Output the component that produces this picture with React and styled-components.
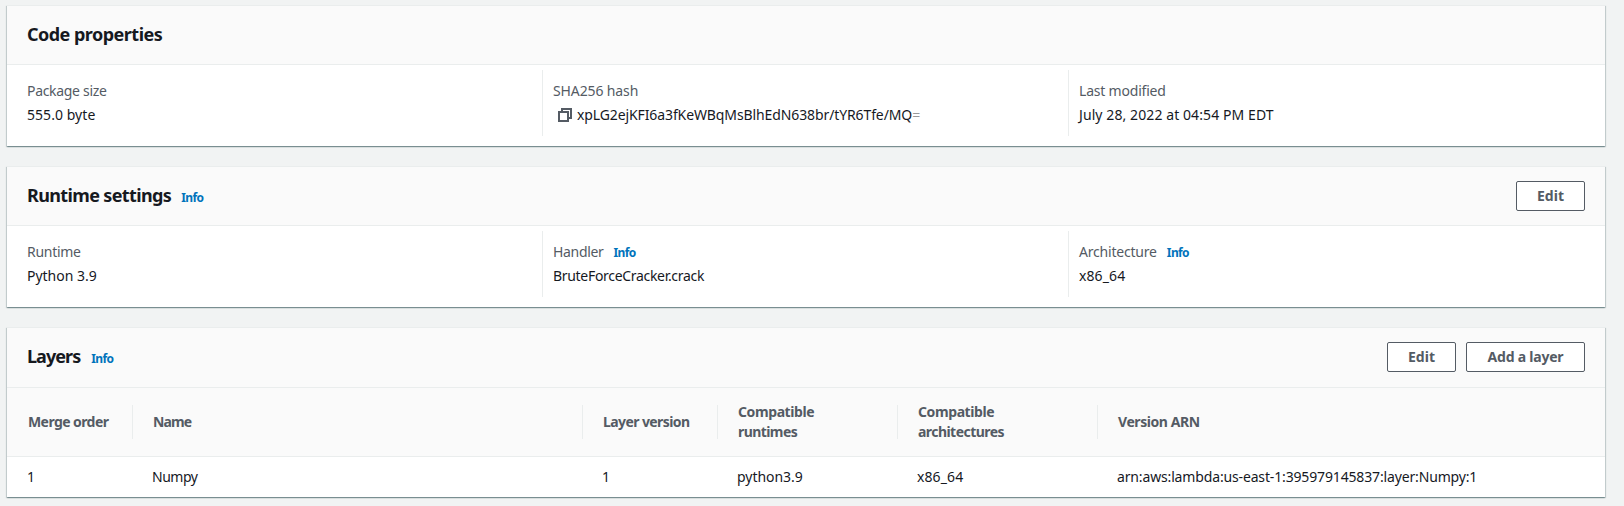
import React from "react";
import styled, { createGlobalStyle } from "styled-components";

const Global = createGlobalStyle`
  * { box-sizing: border-box; }
  body {
    margin: 0;
    background: #f1f3f3;
    color: #16191f;
    font: 14px/22px "Noto Sans", "Open Sans", sans-serif;
  }
`;

const Page = styled.main`
  display: flex;
  flex-direction: column;
  gap: 20px;
  width: 1605px;
  min-height: 506px;
  padding: 5px 0 9px 7px;
`;

const Panel = styled.section`
  background: #fff;
  border-top: 1px solid #eaeded;
  box-shadow:
    0 1px 1px 0 rgba(0, 40, 46, 0.3),
    1px 1px 1px 0 rgba(0, 40, 46, 0.15),
    -1px 1px 1px 0 rgba(0, 40, 46, 0.15);
`;

const PanelHeader = styled.header`
  display: flex;
  align-items: center;
  gap: 10px;
  height: ${(p) => p.$height || 59}px;
  padding: 0 20px ${(p) => (p.$height ? 1 : 0)}px;
  background: #fafafa;
  border-bottom: 1px solid #eaeded;
`;

const Text = styled.span`
  letter-spacing: ${(p) => p.$track || 0}px;
  white-space: nowrap;
`;

const Title = styled.h2`
  margin: 0;
  padding-bottom: 2px;
  font-size: 18px;
  line-height: 22px;
  font-weight: 700;
  letter-spacing: ${(p) => p.$track || 0}px;
`;

const InfoLink = styled.a`
  color: #0073bb;
  font-size: 12px;
  line-height: 20px;
  font-weight: 700;
  letter-spacing: -0.6px;
  margin-left: ${(p) => p.$gap || 0}px;
  padding-top: ${(p) => p.$drop || 0}px;
`;

const Actions = styled.div`
  display: flex;
  gap: 10px;
  margin-left: auto;
`;

const Button = styled.button`
  width: ${(p) => p.$width}px;
  height: 30px;
  padding: 0;
  border: 1px solid #545b64;
  border-radius: 2px;
  background: #fff;
  color: #545b64;
  font: inherit;
  line-height: 20px;
  font-weight: 700;
  letter-spacing: ${(p) => p.$track || 0}px;
`;

const Properties = styled.div`
  display: grid;
  grid-template-columns: 535px 526px 1fr;
  padding: 5px 0 10px;
`;

const Property = styled.div`
  display: flex;
  flex-direction: column;
  gap: 2px;
  height: 66px;
  padding: 10px 0 10px 10px;
  border-left: 1px solid #eaeded;

  &:first-child {
    padding-left: 20px;
    border-left: 0;
  }
`;

const Label = styled.div`
  display: flex;
  align-items: center;
  height: 22px;
  color: #545b64;
`;

const Value = styled.div`
  display: flex;
  align-items: center;
  height: 22px;
`;

const CopyIcon = styled.svg`
  width: 14px;
  height: 14px;
  margin: 0 5px;
  fill: none;
  stroke: #545b64;
  stroke-width: 2;
`;

const Muted = styled.span`
  color: #999;
`;

const Row = styled.div`
  display: grid;
  grid-template-columns: 126px 450px 135px 180px 200px 1fr;
`;

const HeadRow = styled(Row)`
  height: 69px;
  align-items: center;
  background: #fafafa;
  border-bottom: 1px solid #eaeded;
`;

const HeadCell = styled.div`
  display: flex;
  align-items: center;
  height: 34px;
  padding-left: 20px;
  border-right: 1px solid #eaeded;
  color: #545b64;
  font-weight: 700;
  line-height: 20px;

  &:first-child {
    padding-left: 21px;
  }

  &:last-child {
    border-right: 0;
  }
`;

const Stack = styled.div`
  display: flex;
  flex-direction: column;
`;

const DataRow = styled(Row)`
  height: 40px;
  align-items: center;
`;

const Cell = styled.div`
  padding-left: 19px;

  &:first-child {
    padding-left: 20px;
  }
`;

function Item({ label, track, info, children }) {
  return (
    <Property>
      <Label>
        <Text $track={track}>{label}</Text>
        {info && <InfoLink $gap={10} $drop={2}>Info</InfoLink>}
      </Label>
      <Value>{children}</Value>
    </Property>
  );
}

const columns = [
  [["Merge order", -0.58]],
  [["Name", -0.85]],
  [["Layer version", -0.59]],
  [["Compatible", -0.4], ["runtimes", -0.58]],
  [["Compatible", -0.4], ["architectures", -0.55]],
  [["Version ARN", -0.43]],
];

const layer = [
  ["1", 0],
  ["Numpy", -0.5],
  ["1", 0],
  ["python3.9", -0.04],
  ["x86_64", 0.1],
  ["arn:aws:lambda:us-east-1:395979145837:layer:Numpy:1", -0.15],
];

export default function App() {
  return (
    <>
      <Global />
      <Page>
        <Panel>
          <PanelHeader>
            <Title $track={-0.52}>Code properties</Title>
          </PanelHeader>
          <Properties>
            <Item label="Package size" track={-0.31}>
              <Text $track={0.05}>555.0 byte</Text>
            </Item>
            <Item label="SHA256 hash" track={-0.12}>
              <CopyIcon viewBox="0 0 14 14">
                <path d="M1 4h9v9H1z" />
                <path d="M4 4V1h9v9h-3" />
              </CopyIcon>
              <Text $track={-0.11}>
                xpLG2ejKFI6a3fKeWBqMsBlhEdN638br/tYR6Tfe/MQ<Muted>=</Muted>
              </Text>
            </Item>
            <Item label="Last modified" track={-0.2}>
              <Text $track={0.09}>July 28, 2022 at 04:54 PM EDT</Text>
            </Item>
          </Properties>
        </Panel>

        <Panel>
          <PanelHeader>
            <Title $track={-0.63}>Runtime settings</Title>
            <InfoLink $drop={4}>Info</InfoLink>
            <Actions>
              <Button $width={69}>Edit</Button>
            </Actions>
          </PanelHeader>
          <Properties>
            <Item label="Runtime" track={-0.29}>
              <Text $track={-0.02}>Python 3.9</Text>
            </Item>
            <Item label="Handler" track={-0.33} info>
              <Text $track={-0.31}>BruteForceCracker.crack</Text>
            </Item>
            <Item label="Architecture" track={-0.2} info>
              <Text $track={0.1}>x86_64</Text>
            </Item>
          </Properties>
        </Panel>

        <Panel>
          <PanelHeader $height={60}>
            <Title $track={-0.95}>Layers</Title>
            <InfoLink $gap={1} $drop={4}>Info</InfoLink>
            <Actions>
              <Button $width={69}>Edit</Button>
              <Button $width={119} $track={-0.22}>Add a layer</Button>
            </Actions>
          </PanelHeader>
          <HeadRow>
            {columns.map((lines, i) => (
              <HeadCell key={i}>
                <Stack>
                  {lines.map(([text, track]) => (
                    <Text key={text} $track={track}>{text}</Text>
                  ))}
                </Stack>
              </HeadCell>
            ))}
          </HeadRow>
          <DataRow>
            {layer.map(([text, track], i) => (
              <Cell key={i}>
                <Text $track={track}>{text}</Text>
              </Cell>
            ))}
          </DataRow>
        </Panel>
      </Page>
    </>
  );
}
